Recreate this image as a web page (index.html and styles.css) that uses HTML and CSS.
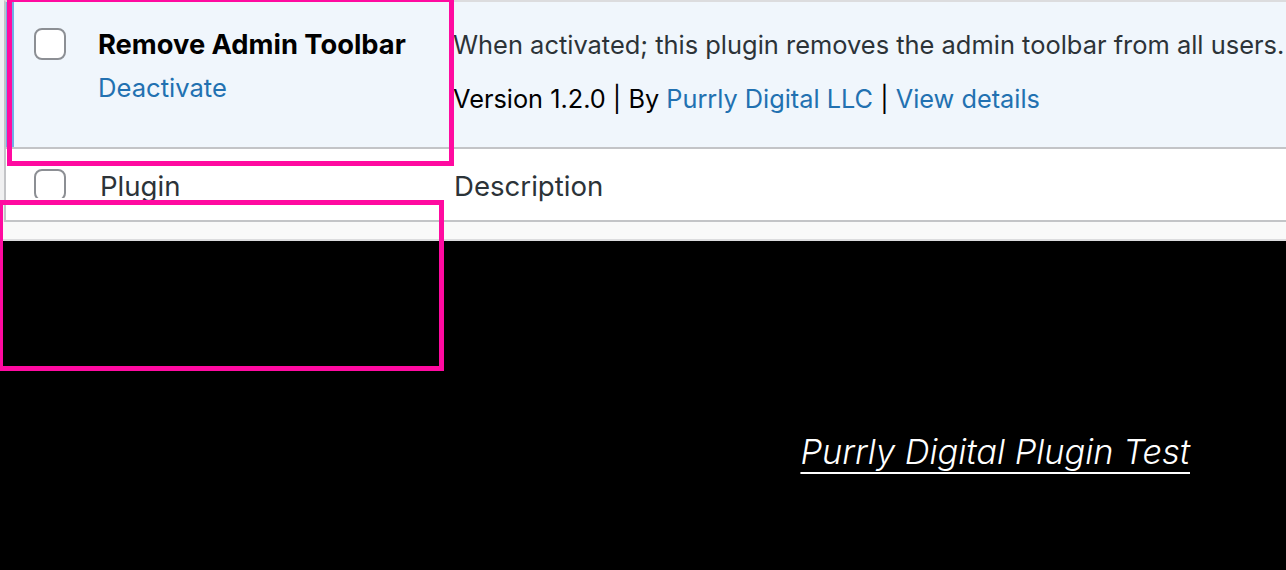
FILE: index.html
```html
<!DOCTYPE html>
<html lang="en">
<head>
<meta charset="utf-8">
<title>Plugins</title>
<link rel="stylesheet" href="styles.css">
</head>
<body>
<div class="page">
  <div class="table">
    <div class="row active">
      <div class="cell check"><span class="box"></span></div>
      <div class="cell title">
        <strong class="name">Remove Admin Toolbar</strong>
        <a class="link deactivate" href="#">Deactivate</a>
      </div>
      <div class="cell desc">
        <p class="desc-text">When activated; this plugin removes the admin toolbar from all users.</p>
        <p class="meta">Version 1.2.0 | By <a class="link" href="#">Purrly Digital LLC</a> | <a class="link" href="#">View details</a></p>
      </div>
    </div>
    <div class="row foot">
      <div class="cell check"><span class="box"></span></div>
      <div class="cell title"><span class="head">Plugin</span></div>
      <div class="cell desc"><span class="head">Description</span></div>
    </div>
  </div>
  <div class="gap"></div>
  <div class="footer">
    <a class="site-title" href="#">Purrly Digital Plugin Test</a>
  </div>
</div>
<div class="mark mark-one"></div>
<div class="mark mark-two"></div>
</body>
</html>
```
FILE: styles.css
```css
* { box-sizing: border-box; }
html, body { margin: 0; padding: 0; }
body {
  background: #f0f0f1;
  font-family: Inter, "Noto Sans", sans-serif;
  width: 1286px;
  height: 570px;
  overflow: hidden;
  position: relative;
}
.page { display: flex; flex-direction: column; height: 570px; }
.table {
  margin-left: 4px;
  width: 1400px;
  border-top: 2px solid #dcdcde;
  border-left: 2px solid #c3c4c7;
  border-bottom: 2px solid #c3c4c7;
  background: #fff;
}
.row {
  display: grid;
  grid-template-columns: 72px 355px 1fr;
}
.row.active {
  background: #f0f6fc;
  height: 147px;
  border-bottom: 2px solid #c3c4c7;
}
.row.foot { height: 71px; }
.cell { padding: 0 20px; }
.check { padding-left: 28px; padding-right: 0; }
.active .check { border-left: 8px solid #72aee6; padding-left: 20px; padding-top: 26px; }
.foot .check { padding-top: 22px; height: 49px; overflow: hidden; }
.box {
  display: block;
  width: 32px;
  height: 32px;
  border: 2px solid #8c8f94;
  border-radius: 8px;
  background: #fff;
}
.title { display: flex; flex-direction: column; }
.active .title { padding-top: 23px; }
.name {
  font-size: 27.3px;
  font-weight: 700;
  color: #000;
  line-height: 40px;
  white-space: nowrap;
}
.link { color: #2271b1; text-decoration: none; }
.deactivate { font-size: 25.6px; line-height: 36px; margin-top: 5px; }
.desc { padding-left: 20px; padding-top: 23px; white-space: nowrap; }
.desc-text { margin: 0; font-size: 25.45px; line-height: 40px; color: #2c3338; }
.meta { margin: 14px 0 0; font-size: 25.3px; line-height: 40px; color: #000; }
.foot .cell { padding-top: 20px; }
.foot .title { padding-left: 22px; }
.foot .desc { padding-left: 21px; }
.head { font-size: 27.6px; line-height: 34px; color: #2c3338; }
.gap {
  height: 19px;
  background: #f9f9f9;
  border-bottom: 2px solid #dcdcde;
}
.footer {
  flex: 1;
  background: #000;
  display: flex;
  justify-content: flex-end;
  align-items: flex-start;
  padding: 189px 96px 0 0;
}
.site-title {
  color: #fff;
  font-size: 34.4px;
  font-style: italic;
  font-weight: 300;
  line-height: 44px;
  text-decoration: underline;
  text-decoration-thickness: 2px;
  text-underline-offset: 8px;
}
.mark {
  position: absolute;
  border: 5px solid #ff0aa0;
  pointer-events: none;
}
.mark-one { left: 7px; top: -3px; width: 447px; height: 169px; }
.mark-two { left: -2px; top: 200px; width: 446px; height: 171px; }
```
